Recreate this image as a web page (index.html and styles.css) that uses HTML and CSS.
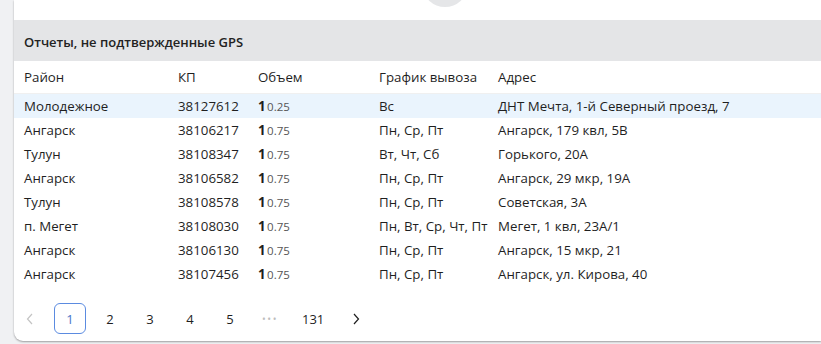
FILE: index.html
```html
<!DOCTYPE html>
<html lang="ru">
<head>
<meta charset="utf-8">
<link rel="stylesheet" href="styles.css">
</head>
<body>
<div class="page">
  <div class="card">
    <div class="top"><div class="blob"></div></div>
    <div class="title">Отчеты, не подтвержденные GPS</div>
    <table class="grid">
      <thead>
        <tr><th class="c1">Район</th><th class="c2">КП</th><th class="c3">Объем</th><th class="c4">График вывоза</th><th>Адрес</th></tr>
      </thead>
      <tbody>
        <tr class="sel"><td>Молодежное</td><td>38127612</td><td><b>1</b> <span class="v">0.25</span></td><td>Вс</td><td>ДНТ Мечта, 1-й Северный проезд, 7</td></tr>
        <tr><td>Ангарск</td><td>38106217</td><td><b>1</b> <span class="v">0.75</span></td><td>Пн, Ср, Пт</td><td>Ангарск, 179 квл, 5В</td></tr>
        <tr><td>Тулун</td><td>38108347</td><td><b>1</b> <span class="v">0.75</span></td><td>Вт, Чт, Сб</td><td>Горького, 20А</td></tr>
        <tr><td>Ангарск</td><td>38106582</td><td><b>1</b> <span class="v">0.75</span></td><td>Пн, Ср, Пт</td><td>Ангарск, 29 мкр, 19А</td></tr>
        <tr><td>Тулун</td><td>38108578</td><td><b>1</b> <span class="v">0.75</span></td><td>Пн, Ср, Пт</td><td>Советская, 3А</td></tr>
        <tr><td>п. Мегет</td><td>38108030</td><td><b>1</b> <span class="v">0.75</span></td><td>Пн, Вт, Ср, Чт, Пт</td><td>Мегет, 1 квл, 23А/1</td></tr>
        <tr><td>Ангарск</td><td>38106130</td><td><b>1</b> <span class="v">0.75</span></td><td>Пн, Ср, Пт</td><td>Ангарск, 15 мкр, 21</td></tr>
        <tr><td>Ангарск</td><td>38107456</td><td><b>1</b> <span class="v">0.75</span></td><td>Пн, Ср, Пт</td><td>Ангарск, ул. Кирова, 40</td></tr>
      </tbody>
    </table>
    <div class="pager">
      <span class="pg arrow dis"><svg width="8" height="12" viewBox="0 0 8 12"><path d="M6 1 L1.5 6 L6 11" fill="none" stroke="currentColor" stroke-width="1.2"/></svg></span>
      <span class="pg cur">1</span>
      <span class="pg">2</span>
      <span class="pg">3</span>
      <span class="pg">4</span>
      <span class="pg">5</span>
      <span class="pg dots">•••</span>
      <span class="pg">131</span>
      <span class="pg arrow"><svg width="8" height="12" viewBox="0 0 8 12"><path d="M2 1 L6.5 6 L2 11" fill="none" stroke="currentColor" stroke-width="1.2"/></svg></span>
    </div>
  </div>
</div>
</body>
</html>
```
FILE: styles.css
```css
html, body {
  margin: 0;
  padding: 0;
  background: #f0f1f3;
  overflow: hidden;
}
body {
  font-family: "Open Sans", "Noto Sans", sans-serif;
  font-size: 13px;
  color: #1f1f1f;
}
.page {
  padding-left: 14px;
  height: 344px;
}
.card {
  background: #fff;
  height: 341px;
  border-radius: 0 0 0 9px;
  box-shadow: 0 1px 2px rgba(0,0,0,0.35);
  position: relative;
  overflow: hidden;
}
.top {
  height: 20px;
  position: relative;
}
.blob {
  position: absolute;
  left: 409px;
  top: -34px;
  width: 44px;
  height: 41px;
  border-radius: 50%;
  background: #e5e6e8;
}
.title {
  background: #e4e5e7;
  height: 41px;
  line-height: 44px;
  padding-left: 10px;
  font-weight: 600;
  font-size: 13px;
  color: #222;
}
.grid {
  border-collapse: collapse;
  width: 100%;
  font-size: 13.3px;
}
.grid th {
  font-weight: 400;
  text-align: left;
  height: 32px;
  padding: 0 0 0 10px;
  border-bottom: 1px solid #f0f0f0;
  color: #1f1f1f;
}
.grid td {
  height: 24px;
  padding: 0 0 0 10px;
  white-space: nowrap;
}
.grid .c1 { width: 144px; }
.grid .c2 { width: 70px; }
.grid .c3 { width: 111px; }
.grid .c4 { width: 109px; }
.grid tr.sel td { background: #eaf4fd; }
.grid b { font-weight: 700; }
.grid .v { font-size: 11.5px; color: #555; margin-left: -2px; }
.pager {
  display: flex;
  align-items: center;
  gap: 8px;
  margin-top: 17px;
  padding-left: 0;
}
.pg {
  min-width: 32px;
  height: 31px;
  padding: 0 8px;
  display: flex;
  align-items: center;
  justify-content: center;
  box-sizing: border-box;
  border-radius: 6px;
  color: #1f1f1f;
  font-size: 13px;
}
.pg.cur {
  border: 1px solid #5b8be0;
  color: #4a74c9;
}
.pg.dis { color: #c4c4c4; }
.pg.dots { color: #bdbdbd; font-size: 10px; letter-spacing: 1.5px; padding: 0; }
```
